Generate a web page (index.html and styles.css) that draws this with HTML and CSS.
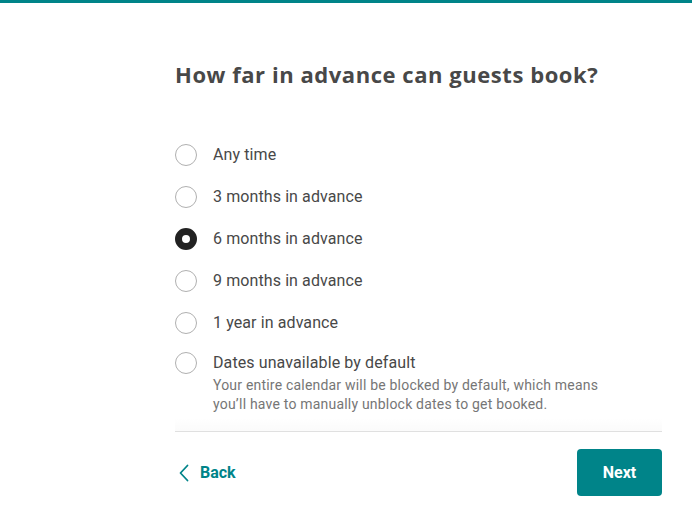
FILE: index.html
```html
<!DOCTYPE html>
<html>
<head>
<meta charset="utf-8">
<link rel="stylesheet" href="styles.css">
</head>
<body>
<div class="topbar"></div>
<main class="page">
  <h1 class="title">How far in advance can guests book?</h1>
  <div class="options">
    <label class="option"><span class="radio"></span><span class="label">Any time</span></label>
    <label class="option"><span class="radio"></span><span class="label">3 months in advance</span></label>
    <label class="option"><span class="radio checked"></span><span class="label">6 months in advance</span></label>
    <label class="option"><span class="radio"></span><span class="label">9 months in advance</span></label>
    <label class="option"><span class="radio"></span><span class="label">1 year in advance</span></label>
    <label class="option last"><span class="radio"></span>
      <span class="text">
        <span class="label">Dates unavailable by default</span>
        <span class="desc">Your entire calendar will be blocked by default, which means you’ll have to manually unblock dates to get booked.</span>
      </span>
    </label>
  </div>
  <footer class="footer">
    <a class="back"><svg class="chev" width="12" height="18" viewBox="0 0 12 18"><path d="M9.5 1.5 L2.5 9 L9.5 16.5" fill="none" stroke="#008489" stroke-width="1.8" stroke-linecap="round" stroke-linejoin="round"/></svg><span>Back</span></a>
    <button class="next">Next</button>
  </footer>
</main>
</body>
</html>
```
FILE: styles.css
```css
* { box-sizing: border-box; }
html, body { margin: 0; padding: 0; background: #fff; }
body { font-family: Roboto, "Liberation Sans", sans-serif; color: #484848; }
.topbar { height: 3px; background: #008489; }
.page { margin-left: 175px; width: 487px; }
.title { margin: 0; padding-top: 57px; font-family: "Open Sans", Roboto, sans-serif; font-size: 22px; line-height: 28px; font-weight: 700; color: #484848; letter-spacing: 0.55px; white-space: nowrap; }
.options { display: flex; flex-direction: column; gap: 20px; margin-top: 56px; }
.option { display: flex; align-items: flex-start; gap: 16px; }
.option.last { margin-top: -2px; }
.radio { width: 22px; height: 22px; border-radius: 50%; border: 1px solid #b0b0b0; flex: none; background: #fff; }
.radio.checked { border: 7px solid #222; background: #fff; }
.label { font-size: 16px; line-height: 22px; color: #484848; letter-spacing: 0.1px; }
.text { display: flex; flex-direction: column; }
.desc { font-size: 14px; line-height: 19px; color: #767676; margin-top: 2px; width: 410px; letter-spacing: 0.2px; }
.footer { position: relative; margin-top: 17px; border-top: 1px solid #e4e4e4; padding-top: 17px; display: flex; justify-content: space-between; align-items: center; }
.footer::before { content: ""; position: absolute; left: 0; right: 0; bottom: 100%; height: 14px; background: linear-gradient(to bottom, rgba(0,0,0,0), rgba(0,0,0,0.02)); }
.back { display: flex; align-items: center; gap: 10px; color: #008489; font-weight: 700; font-size: 16px; padding-left: 3px; }
.chev { display: block; }
.next { width: 85px; height: 47px; background: #008489; color: #fff; border: none; border-radius: 4px; font-family: inherit; font-size: 16px; font-weight: 700; }
```
